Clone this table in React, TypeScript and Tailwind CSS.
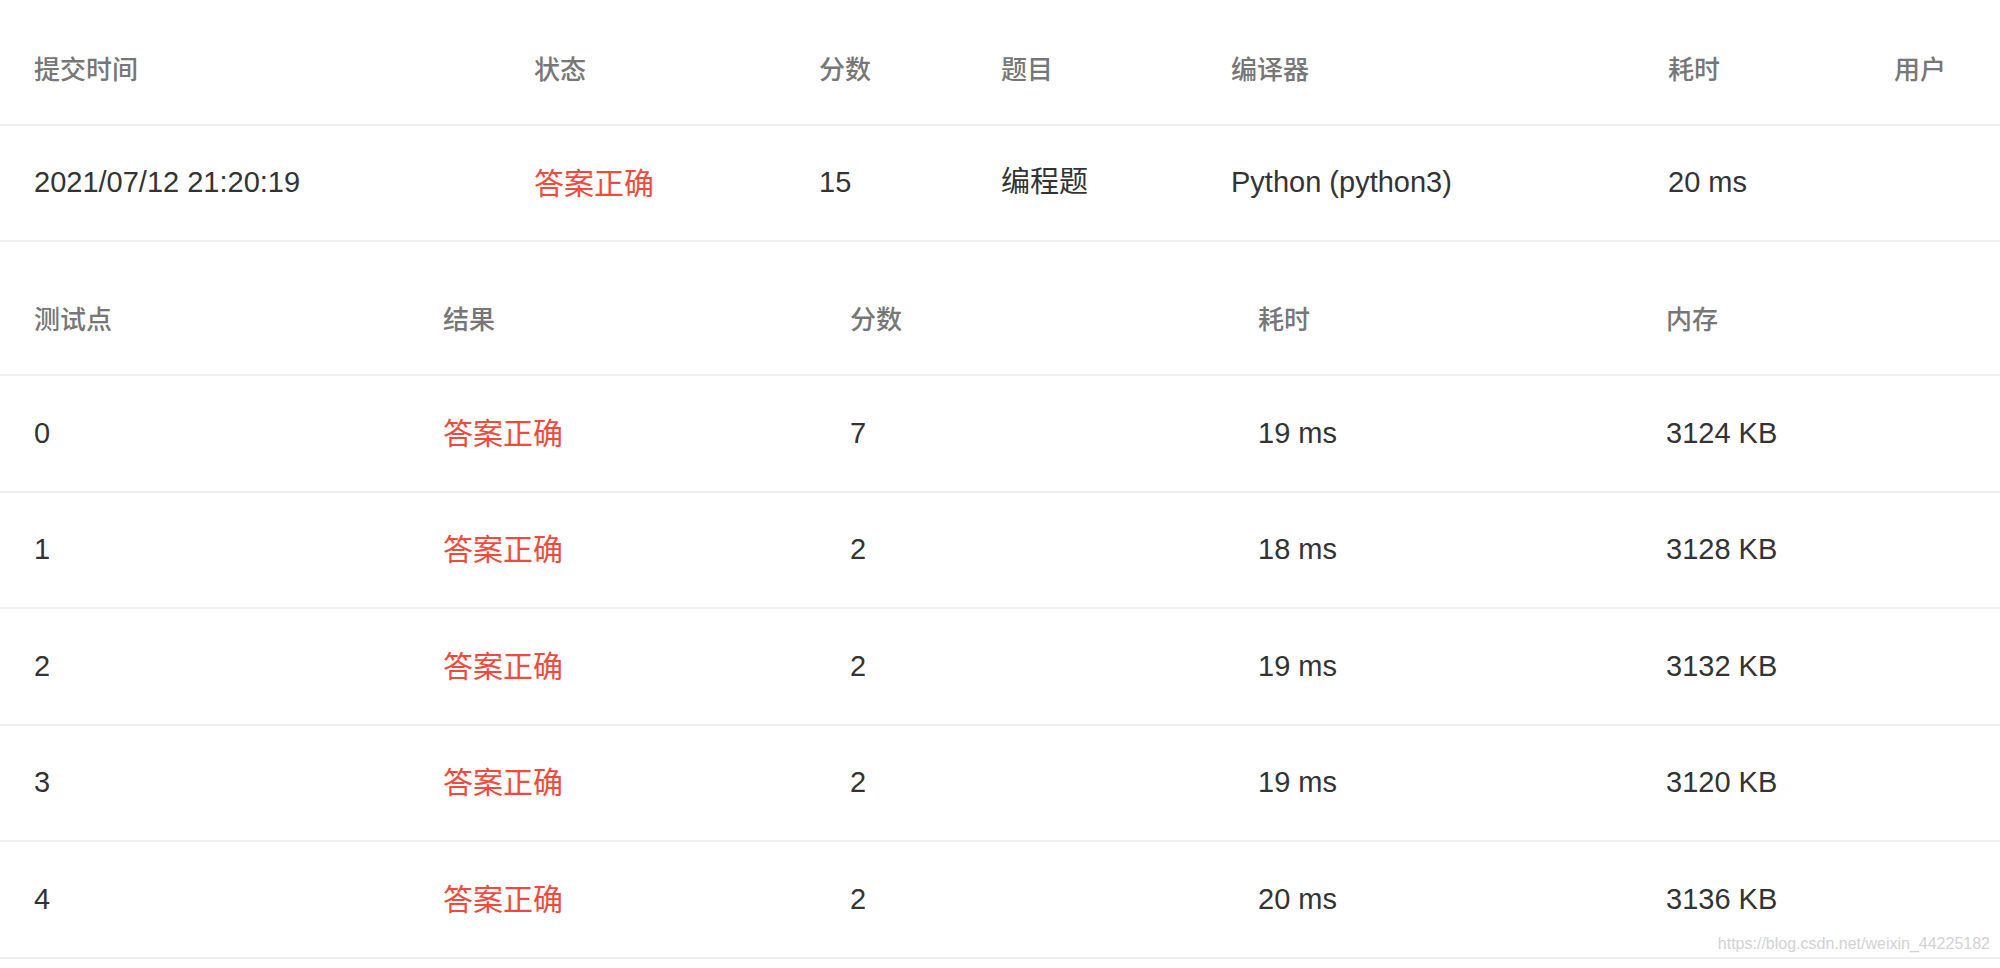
import React from 'react';

const font = { fontFamily: '"Liberation Sans", "Noto Sans CJK SC", sans-serif' };

interface Column {
  label: string;
  width: string;
}

const submitColumns: Column[] = [
  { label: '提交时间', width: 'w-[500px]' },
  { label: '状态', width: 'w-[285px]' },
  { label: '分数', width: 'w-[182px]' },
  { label: '题目', width: 'w-[230px]' },
  { label: '编译器', width: 'w-[437px]' },
  { label: '耗时', width: 'w-[226px]' },
  { label: '用户', width: 'flex-1' },
];

const caseColumns: Column[] = [
  { label: '测试点', width: 'w-[409px]' },
  { label: '结果', width: 'w-[407px]' },
  { label: '分数', width: 'w-[408px]' },
  { label: '耗时', width: 'w-[408px]' },
  { label: '内存', width: 'flex-1' },
];

const cases = [
  { id: '0', score: '7', time: '19 ms', memory: '3124 KB' },
  { id: '1', score: '2', time: '18 ms', memory: '3128 KB' },
  { id: '2', score: '2', time: '19 ms', memory: '3132 KB' },
  { id: '3', score: '2', time: '19 ms', memory: '3120 KB' },
  { id: '4', score: '2', time: '20 ms', memory: '3136 KB' },
];

function HeaderRow({ columns }: { columns: Column[] }) {
  return (
    <div className="flex h-[110px] items-center border-b-2 border-[#efefef]">
      {columns.map((col) => (
        <div key={col.label} className={`${col.width} shrink-0 pl-[34px] text-[26px] font-medium text-[#777777]`}>
          {col.label}
        </div>
      ))}
    </div>
  );
}

function Cell({ width, children, accepted }: { width: string; children?: React.ReactNode; accepted?: boolean }) {
  return (
    <div className={`${width} shrink-0 pl-[34px] ${accepted ? 'text-[30px] text-[#ef4a3c]' : 'text-[29px] text-[#333333]'}`}>
      {children}
    </div>
  );
}

export default function App() {
  return (
    <div className="relative min-h-[968px] w-[2000px] overflow-hidden bg-white" style={font}>
      {/* submission summary */}
      <div className="pt-[16px]">
        <HeaderRow columns={submitColumns} />
        <div className="flex h-[116px] items-center border-b-2 border-[#efefef]">
          <Cell width="w-[500px]">2021/07/12 21:20:19</Cell>
          <Cell width="w-[285px]" accepted>答案正确</Cell>
          <Cell width="w-[182px]">15</Cell>
          <Cell width="w-[230px]">编程题</Cell>
          <Cell width="w-[437px]">Python (python3)</Cell>
          <Cell width="w-[226px]">20 ms</Cell>
          <Cell width="flex-1" />
        </div>
      </div>

      {/* test cases */}
      <div className="mt-[24px]">
        <HeaderRow columns={caseColumns} />
        {cases.map((c) => (
          <div key={c.id} className="flex h-[116.5px] items-center border-b-2 border-[#efefef]">
            <Cell width="w-[409px]">{c.id}</Cell>
            <Cell width="w-[407px]" accepted>答案正确</Cell>
            <Cell width="w-[408px]">{c.score}</Cell>
            <Cell width="w-[408px]">{c.time}</Cell>
            <Cell width="flex-1">{c.memory}</Cell>
          </div>
        ))}
      </div>

      <div className="absolute right-[10px] top-[936px] text-[16px] leading-none text-[#d2d2d2]">
        https://blog.csdn.net/weixin_44225182
      </div>
    </div>
  );
}
